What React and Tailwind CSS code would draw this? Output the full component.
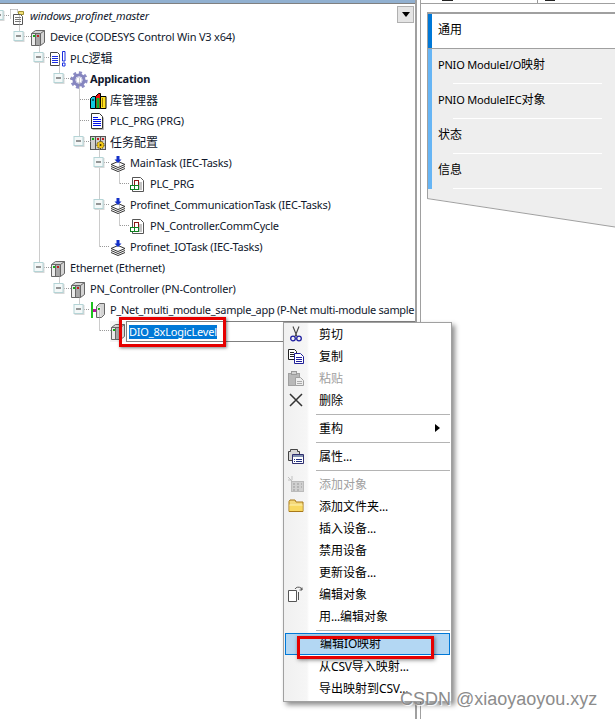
import React from 'react';

// latin text in these panels is smaller than the CJK next to it
const Txt = ({ children }) =>
  children.split(/([\u4e00-\u9fff]+)/).map((part, i) =>
    i % 2 ? (
      <span key={i} className="text-[12px] tracking-normal">{part}</span>
    ) : (
      part
    )
  );

const IconRoot = () => (
  <svg width="18" height="18" viewBox="0 0 18 18">
    <path d="M0.5 1.5h7M0.5 1.5v9M7.5 1.5v3" stroke="#999" strokeDasharray="1 1" fill="none" />
    <path d="M8.5 3.5h5v3h-5z" fill="#f2e27a" stroke="#a09030" />
    <path d="M3.5 6.5h7l2 2v8h-9z" fill="#fff" stroke="#555" />
    <path d="M5 9.5h6M5 11.5h6M5 13.5h6" stroke="#777" />
  </svg>
);

const IconDevice = ({ small }) => (
  <svg width="16" height="17" viewBox="0 0 16 17">
    <path d="M1.5 4.5l4-3h9v12l-4 3h-9z" fill="#d4d4d4" stroke="#666" />
    <path d="M5.5 4.5v12M10.5 4.5v12M1.5 4.5h9l4-3" fill="none" stroke="#666" />
    <rect x="2" y="5" width="3" height="11" fill="#ececec" />
    <rect x="6" y="5" width="4" height="11" fill="#a8a8a8" />
    <rect x="3" y="6" width="2" height="2" fill="#10b010" />
    {!small && <rect x="7" y="6" width="2" height="2" fill="#c02020" />}
  </svg>
);

const IconPlc = () => (
  <svg width="17" height="16" viewBox="0 0 17 16">
    <path d="M0.5 1.5h7l2 2v11h-9z" fill="#fff" stroke="#444" />
    <path d="M2 5.5h6M2 7.5h6M2 9.5h6M2 11.5h6" stroke="#1a2ee0" />
    <path d="M12.5 0.5h2.5v9.5h-2.5zM12.5 12h2.5v3h-2.5z" fill="#fff" stroke="#1a2ee0" />
  </svg>
);

const IconGear = () => (
  <svg width="18" height="18" viewBox="0 0 18 18">
    <circle cx="9" cy="9" r="7.2" fill="none" stroke="#8c8cc4" strokeWidth="3" strokeDasharray="3 2.6" />
    <circle cx="9" cy="9" r="5" fill="none" stroke="#8585bf" strokeWidth="3.2" />
    <circle cx="9" cy="9" r="3" fill="#fff" stroke="#d0d0e6" />
  </svg>
);

const IconLib = () => (
  <svg width="17" height="16" viewBox="0 0 17 16">
    <path d="M0.5 5.5l2-2h3v12h-5z" fill="#10c8e0" stroke="#000" />
    <path d="M5.5 3.5l3-3h2v15h-5z" fill="#f01010" stroke="#000" />
    <path d="M2 7h2" stroke="#000" />
    <path d="M10.500 3.500h5.500v12h-5.500z" fill="#ffe020" stroke="#000" />
    <path d="M6.500 5h3v10h-3z" fill="#10b030" />
    <path d="M12.500 5v9" stroke="#a08000" />
  </svg>
);

const IconPage = () => (
  <svg width="15" height="17" viewBox="0 0 15 17" className="shrink-0">
    <path d="M1.500 0.500h8l3 3v12h-11z" fill="#fff" stroke="#333" />
    <path d="M13.500 4.500v12h-11" fill="none" stroke="#bbb" />
    <path d="M3 4.500h5M3 6.500h8M3 8.500h8M3 10.500h8M3 12.500h8" stroke="#0010e8" />
  </svg>
);

const IconTaskCfg = () => (
  <svg width="17" height="16" viewBox="0 0 17 16">
    <rect x="0.5" y="1.5" width="15" height="13" fill="#cfcfcf" stroke="#555" />
    <path d="M5.5 1.5v13M10.5 1.5v13" stroke="#555" />
    <rect x="2" y="3" width="2" height="2" fill="#10b010" />
    <rect x="7" y="3" width="2" height="2" fill="#c02020" />
    <rect x="12" y="3" width="2" height="2" fill="#c02020" />
    <circle cx="10.5" cy="10" r="3.6" fill="#f4c814" stroke="#3a3000" strokeDasharray="1.5 1" />
    <circle cx="10.5" cy="10" r="1" fill="#3a3000" />
  </svg>
);

const IconTask = () => (
  <svg width="16" height="16" viewBox="0 0 16 16">
    <path d="M8 5.5l7 3-7 3-7-3z" fill="#fff" stroke="#333" />
    <path d="M1 10.5l7 3 7-3M1 12.5l7 3 7-3" fill="none" stroke="#333" />
    <path d="M6.5 0h3v3.5h2l-3.5 3.500-3.500-3.500h2z" fill="#1430c8" />
  </svg>
);

const IconPou = () => (
  <svg width="15" height="16" viewBox="0 0 15 16">
    <path d="M2.500 0.500h8l3 3v11h-11z" fill="#fff" stroke="#555" />
    <path d="M9 6h3M9 8h3M9 10h3M9 12h3" stroke="#888" />
    <rect x="4.500" y="3.500" width="4" height="6" fill="#fff" stroke="#901818" />
    <rect x="0.500" y="8.500" width="4" height="4" fill="#fff" stroke="#108020" />
    <rect x="4.500" y="8.500" width="4" height="4" fill="#fff" stroke="#108020" />
  </svg>
);

const IconNet = () => (
  <svg width="16" height="17" viewBox="0 0 16 17">
    <rect x="1" y="0" width="2" height="16" fill="#20c020" />
    <rect x="3" y="7" width="3" height="3" fill="#c010a0" />
    <path d="M6.500 4.500l3-3h5v11l-3 3h-5z" fill="#d4d4d4" stroke="#666" />
    <rect x="7.500" y="5" width="3" height="10" fill="#eee" />
    <rect x="8" y="6" width="2" height="2" fill="#10b010" />
  </svg>
);

const IconScissors = () => (
  <svg width="12" height="16" viewBox="0 0 12 16" fill="none">
    <path d="M3 0.500l4 10M9 0.500l-4 10" stroke="#444" strokeWidth="1.100" />
    <circle cx="3" cy="12.500" r="2.300" stroke="#2020a0" strokeWidth="1.300" />
    <circle cx="9" cy="12.500" r="2.300" stroke="#2020a0" strokeWidth="1.300" />
  </svg>
);

const IconCopy = () => (
  <svg width="16" height="15" viewBox="0 0 16 15">
    <path d="M0.500 0.500h6l2 2v8h-8z" fill="#fff" stroke="#222" />
    <path d="M2 3.500h4M2 5.500h4M2 7.500h4" stroke="#222" />
    <path d="M6.500 4.500h6l3 3v7h-9z" fill="#fff" stroke="#20209a" />
    <path d="M8 8.500h6M8 10.500h6M8 12.500h6" stroke="#20209a" />
  </svg>
);

const IconPaste = () => (
  <svg width="16" height="15" viewBox="0 0 16 15">
    <rect x="0.500" y="2.500" width="11" height="12" fill="#b8b8b8" stroke="#a0a0a0" />
    <rect x="3.500" y="0.500" width="5" height="3" fill="#d0d0d0" stroke="#999" />
    <path d="M7.500 6.500h5l3 3v5h-8z" fill="#eee" stroke="#a0a0a0" />
    <path d="M9 10.500h5M9 12.500h5" stroke="#aaa" />
  </svg>
);

const IconDelete = () => (
  <svg width="14" height="14" viewBox="0 0 14 14">
    <path d="M1 1l12 12M13 1L1 13" stroke="#333" strokeWidth="1.500" />
  </svg>
);

const IconProps = () => (
  <svg width="16" height="15" viewBox="0 0 16 15">
    <path d="M0.500 2.500h2v-2h7v2h2v9h-11z" fill="#d8d8d8" stroke="#444" />
    <path d="M4.500 5.500h11v9h-11z" fill="#fff" stroke="#303070" />
    <rect x="5" y="6" width="10" height="2" fill="#8090b0" />
    <path d="M6 10.500h1M8 10.500h6M6 12.500h1M8 12.500h6" stroke="#203080" />
  </svg>
);

const IconAddObj = () => (
  <svg width="16" height="16" viewBox="0 0 16 16">
    <rect x="3.500" y="5.500" width="12" height="10" fill="#d0d0d0" stroke="#bbb" />
    <path d="M5 8h2M9 8h2M13 8h1M5 11h2M9 11h2M13 11h1M5 14h2M9 14h2" stroke="#999" />
    <path d="M0 1l4 4M4 0v4M0 4h3" stroke="#c0c0c0" />
  </svg>
);

const IconFolder = () => (
  <svg width="16" height="14" viewBox="0 0 16 14">
    <path d="M1 2.500l1-1.500h5l1 2h7v9.500H1z" fill="#f4d97a" stroke="#a87818" />
    <path d="M1.500 6h13v6h-13z" fill="#f8d860" />
    <path d="M1.500 6h13" stroke="#fff3b0" />
  </svg>
);

const IconEdit = () => (
  <svg width="15" height="16" viewBox="0 0 15 16" fill="none">
    <path d="M0.500 4.500h8v11h-8z" fill="#fff" stroke="#555" />
    <path d="M7 3c1-2 4-2.500 6-1l1 2M14 1.500V4h-2.500" stroke="#555" />
    <path d="M10.500 6v8" stroke="#555" />
  </svg>
);

const rows = [
  { pad: 'pl-[10px]', icon: <IconRoot />, text: 'windows_profinet_master', cls: 'italic' },
  { pad: 'pl-[30px]', icon: <IconDevice />, text: 'Device (CODESYS Control Win V3 x64)' },
  { pad: 'pl-[50px]', icon: <IconPlc />, text: 'PLC逻辑' },
  { pad: 'pl-[70px]', icon: <IconGear />, text: 'Application', cls: 'font-bold' },
  { pad: 'pl-[90px]', icon: <IconLib />, text: '库管理器' },
  { pad: 'pl-[90px]', icon: <IconPage />, text: 'PLC_PRG (PRG)' },
  { pad: 'pl-[90px]', icon: <IconTaskCfg />, text: '任务配置' },
  { pad: 'pl-[110px]', icon: <IconTask />, text: 'MainTask (IEC-Tasks)' },
  { pad: 'pl-[130px]', icon: <IconPou />, text: 'PLC_PRG' },
  { pad: 'pl-[110px]', icon: <IconTask />, text: 'Profinet_CommunicationTask (IEC-Tasks)' },
  { pad: 'pl-[130px]', icon: <IconPou />, text: 'PN_Controller.CommCycle' },
  { pad: 'pl-[110px]', icon: <IconTask />, text: 'Profinet_IOTask (IEC-Tasks)' },
  { pad: 'pl-[50px]', icon: <IconDevice />, text: 'Ethernet (Ethernet)' },
  { pad: 'pl-[70px]', icon: <IconDevice />, text: 'PN_Controller (PN-Controller)' },
  { pad: 'pl-[90px]', icon: <IconNet />, text: 'P_Net_multi_module_sample_app (P-Net multi-module sample ap', cls: 'tracking-[-0.3px]' },
];

const expanders = [
  [-1, 0], [19, 1], [39, 2], [59, 3], [79, 6], [99, 7], [99, 9], [39, 12], [59, 13], [79, 14],
];

const rowY = (i) => 15.5 + i * 21;

// dotted tree lines plus the little minus boxes
function TreeLines() {
  const lines = [
    [19.5, 0, 19.5, 1], [39.5, 1, 39.5, 12], [59.5, 2, 59.5, 3], [79.5, 3, 79.5, 6],
    [99.5, 6, 99.5, 11], [119.5, 7, 119.5, 8], [119.5, 9, 119.5, 10], [59.5, 12, 59.5, 13],
    [79.5, 13, 79.5, 14], [99.5, 14, 99.5, 15],
  ];
  const hs = [
    [4, 10, 0], [24, 31, 1], [44, 51, 2], [64, 71, 3], [80, 90, 4], [80, 90, 5], [84, 91, 6],
    [104, 110, 7], [120, 130, 8], [104, 110, 9], [120, 130, 10], [100, 110, 11],
    [44, 51, 12], [64, 71, 13], [84, 90, 14], [100, 112, 15],
  ];
  return (
    <svg className="absolute left-0 top-0 pointer-events-none" width="160" height="345">
      {lines.map((l, i) => (
        <line key={i} x1={l[0]} x2={l[2]} y1={rowY(l[1])} y2={rowY(l[3])} stroke="#999" strokeDasharray="1 1" />
      ))}
      {hs.map((h, i) => (
        <line key={i} x1={h[0]} x2={h[1]} y1={rowY(h[2])} y2={rowY(h[2])} stroke="#999" strokeDasharray="1 1" />
      ))}
      {expanders.map((e, i) => (
        <g key={i}>
          <rect x={e[0] - 4.5} y={rowY(e[1]) - 4.5} width="10" height="10" fill="#d8d8d8" />
          <rect x={e[0] - 5} y={rowY(e[1]) - 5} width="9" height="9" fill="#f4f8f8" stroke="#b4d4d6" />
          <line x1={e[0] - 3} x2={e[0] + 2} y1={rowY(e[1]) - 0.5} y2={rowY(e[1]) - 0.5} stroke="#333" />
        </g>
      ))}
    </svg>
  );
}

const menuItems = [
  { icon: <IconScissors />, label: '剪切' },
  { icon: <IconCopy />, label: '复制' },
  { icon: <IconPaste />, label: '粘贴', off: true },
  { icon: <IconDelete />, label: '删除' },
  { sep: true },
  { label: '重构', arrow: true },
  { sep: true },
  { icon: <IconProps />, label: '属性...' },
  { sep: true },
  { icon: <IconAddObj />, label: '添加对象', off: true },
  { icon: <IconFolder />, label: '添加文件夹...' },
  { label: '插入设备...' },
  { label: '禁用设备' },
  { label: '更新设备...' },
  { icon: <IconEdit />, label: '编辑对象' },
  { label: '用...编辑对象' },
  { sep: true },
  { label: '编辑IO映射', active: true },
  { label: '从CSV导入映射...' },
  { label: '导出映射到CSV...' },
];

function ContextMenu() {
  return (
    <div className="absolute left-[283px] top-[322px] w-[169px] h-[380px] border border-[#a0a0a0] bg-[linear-gradient(90deg,#f0f0f0_0,#f6f6f6_23px,#fff_25px)] shadow-[3px_3px_5px_rgba(0,0,0,0.45)] text-[12px] text-black">
      {menuItems.map((item, i) =>
        item.sep ? (
          <div key={i} className="h-[6px] pt-[3px] pl-[32px] pr-[1px]">
            <div className="h-px bg-[#b4b4b4]"></div>
          </div>
        ) : (
          <div
            key={i}
            className={
              'relative flex items-center h-[22px] ' +
              (item.active ? 'ml-px mr-px border border-[#0078d7] bg-[#b3d7f3]' : '') +
              (item.off ? ' text-[#a0a0a0]' : '')
            }
          >
            <div className={item.active ? 'w-[34px] shrink-0' : 'w-[35px] shrink-0 flex justify-center pr-[12px]'}>
              {item.icon}
            </div>
            <span className={'whitespace-nowrap ' + (item.active ? '' : 'pt-[2px]')}>
              <Txt>{item.label}</Txt>
            </span>
            {item.arrow && (
              <svg className="absolute right-[11px] top-[7px]" width="5" height="8" viewBox="0 0 5 8">
                <path d="M0 0l5 4-5 4z" fill="#000" />
              </svg>
            )}
          </div>
        )
      )}
    </div>
  );
}

const navItems = ['PNIO ModuleI/O映射', 'PNIO ModuleIEC对象', '状态', '信息'];

export default function App() {
  return (
    <div className="relative flex w-[615px] h-[719px] overflow-hidden bg-white font-['Noto_Sans','Noto_Sans_CJK_SC',sans-serif] text-[11px] tracking-[-0.2px] text-[#10182c]">
      {/* tree side */}
      <div className="relative w-[415px] shrink-0 overflow-hidden">
        <div className="h-[4px] bg-[#91b0d0] border-b border-[#808080]"></div>
        <div className="flex justify-end pr-[1px] pt-[2px] h-[1px]">
          <div className="flex items-center justify-center w-[17px] h-[17px] border border-[#b0b0b0] bg-[#e4e4e4] z-10">
            <svg width="8" height="5" viewBox="0 0 8 5">
              <path d="M0 0h8L4 5z" fill="#000" />
            </svg>
          </div>
        </div>
        <div>
          {rows.map((r, i) => (
            <div key={i} className={'flex items-center h-[21px] whitespace-nowrap ' + r.pad}>
              <div className="w-[20px] shrink-0">{r.icon}</div>
              <span className={r.cls}>
                <Txt>{r.text}</Txt>
              </span>
            </div>
          ))}
          <div className="flex h-[21px] pl-[110px]">
            <div className="w-[16px] shrink-0 flex items-center bg-[#f4f4f4]">
              <IconDevice small />
            </div>
            <div className="flex-1 border border-[#808080] pl-[2px] pt-[2px]">
              <span className="inline-block h-[14px] leading-[14px] bg-[#0078d7] text-white">DIO_8xLogicLevel</span>
            </div>
          </div>
        </div>
        <TreeLines />
      </div>

      {/* properties side */}
      <div className="flex-1 border-l-2 border-[#a0a0a0] pl-[3px]">
        <div className="border-l border-[#a0a0a0] h-full">
          <div className="relative h-[4px] border-b border-[#a0a0a0]">
            <div className="absolute left-[21px] top-0 w-[11px] h-px bg-[#222]"></div>
            <div className="absolute left-[116px] top-0 w-px h-[3px] bg-[#999]"></div>
            <div className="absolute left-[124px] top-0 w-[10px] h-px bg-[#222]"></div>
          </div>
          <div className="pl-[6px] pt-[8px]">
            <div className="border-t-2 border-l border-[#a0a0a0] bg-[#eeeeee] text-black">
              <div className="flex h-[35px] bg-white border-b border-[#a0a0a0]">
                <div className="w-[4px] bg-[#0078d7]"></div>
                <div className="flex items-center pl-[6px] pb-[2px]">
                  <Txt>通用</Txt>
                </div>
              </div>
              {navItems.map((label) => (
                <div key={label} className="flex h-[35px]">
                  <div className="w-[4px] bg-[#66b5f5]"></div>
                  <div className="flex-1 flex flex-col">
                    <div className="flex-1 flex items-center pl-[6px] pb-[2px]">
                      <span>
                        <Txt>{label}</Txt>
                      </span>
                    </div>
                    <div className="h-px ml-[21px] w-[149px] bg-white"></div>
                  </div>
                </div>
              ))}
              <div className="h-[9px]"></div>
            </div>
            <svg width="188" height="30" viewBox="0 0 188 30" className="block">
              <path d="M0 0L188 29V0z" fill="#eeeeee" />
              <path d="M0 0.500L188 29" stroke="#a0a0a0" fill="none" />
            </svg>
          </div>
        </div>
      </div>

      {/* red annotations and popup sit over the app */}
      <div className="absolute left-[119px] top-[317px] w-[107px] h-[30px] border-[3px] border-[#e60000] shadow-[1px_1px_3px_rgba(0,0,0,0.5)]"></div>
      <ContextMenu />
      <div className="absolute left-[297px] top-[636px] w-[137px] h-[23px] border-[3px] border-[#e60000] shadow-[1px_1px_4px_rgba(0,0,0,0.5)]"></div>
      <div className="absolute left-[400px] top-[689px] whitespace-nowrap font-['Liberation_Sans',sans-serif] text-[18px] tracking-normal leading-[20px] text-[#8c8c8c] [text-shadow:1px_1px_1px_#fff]">
        CSDN @xiaoyaoyou.xyz
      </div>
    </div>
  );
}
